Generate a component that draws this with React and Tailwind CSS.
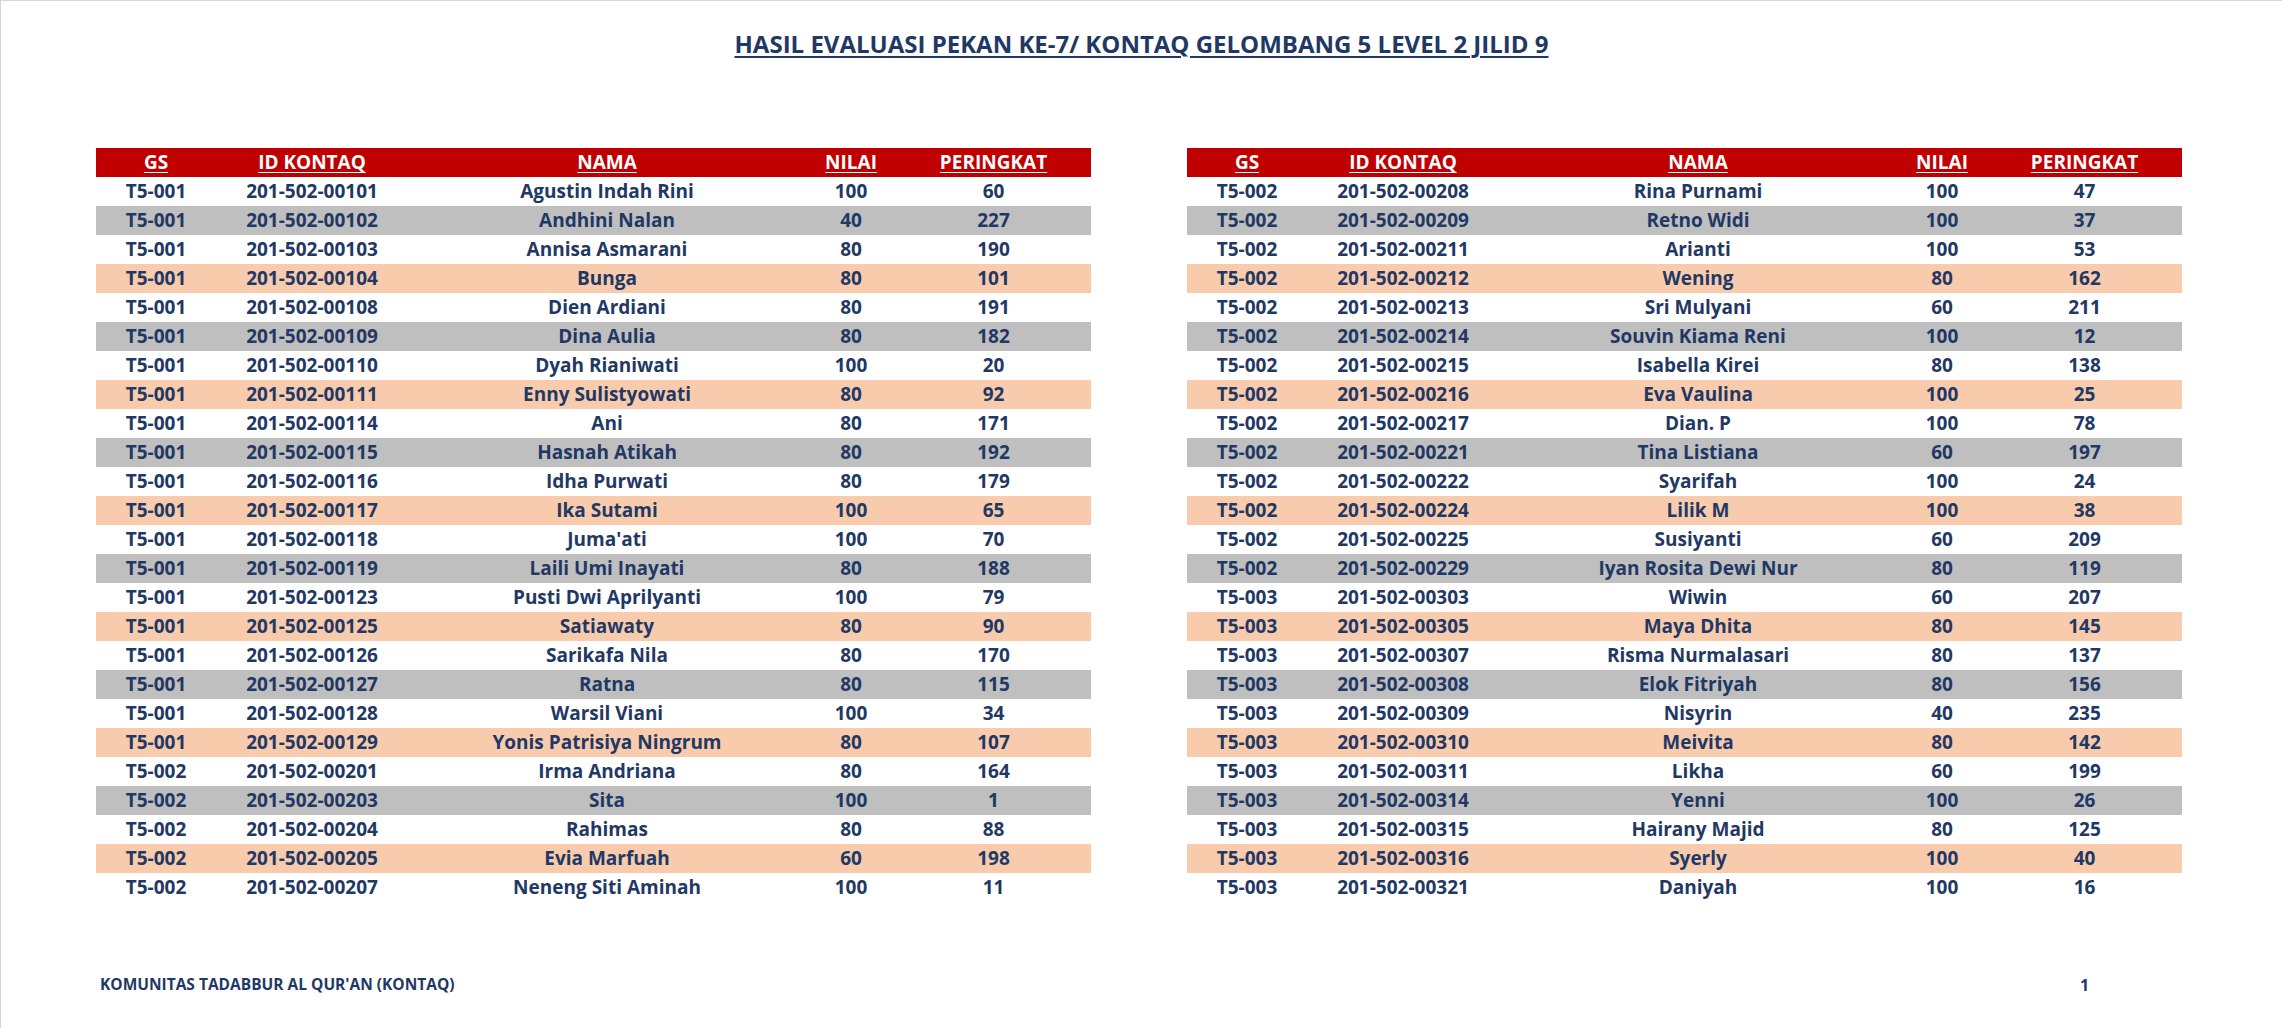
import React from 'react';

const cols = 'grid grid-cols-[120px_192px_398px_90px_195px]';

const leftRows = [
  ['T5-001', '201-502-00101', 'Agustin Indah Rini', 100, 60],
  ['T5-001', '201-502-00102', 'Andhini Nalan', 40, 227],
  ['T5-001', '201-502-00103', 'Annisa Asmarani', 80, 190],
  ['T5-001', '201-502-00104', 'Bunga', 80, 101],
  ['T5-001', '201-502-00108', 'Dien Ardiani', 80, 191],
  ['T5-001', '201-502-00109', 'Dina Aulia', 80, 182],
  ['T5-001', '201-502-00110', 'Dyah Rianiwati', 100, 20],
  ['T5-001', '201-502-00111', 'Enny Sulistyowati', 80, 92],
  ['T5-001', '201-502-00114', 'Ani', 80, 171],
  ['T5-001', '201-502-00115', 'Hasnah Atikah', 80, 192],
  ['T5-001', '201-502-00116', 'Idha Purwati', 80, 179],
  ['T5-001', '201-502-00117', 'Ika Sutami', 100, 65],
  ['T5-001', '201-502-00118', "Juma'ati", 100, 70],
  ['T5-001', '201-502-00119', 'Laili Umi Inayati', 80, 188],
  ['T5-001', '201-502-00123', 'Pusti Dwi Aprilyanti', 100, 79],
  ['T5-001', '201-502-00125', 'Satiawaty', 80, 90],
  ['T5-001', '201-502-00126', 'Sarikafa Nila', 80, 170],
  ['T5-001', '201-502-00127', 'Ratna', 80, 115],
  ['T5-001', '201-502-00128', 'Warsil Viani', 100, 34],
  ['T5-001', '201-502-00129', 'Yonis Patrisiya Ningrum', 80, 107],
  ['T5-002', '201-502-00201', 'Irma Andriana', 80, 164],
  ['T5-002', '201-502-00203', 'Sita', 100, 1],
  ['T5-002', '201-502-00204', 'Rahimas', 80, 88],
  ['T5-002', '201-502-00205', 'Evia Marfuah', 60, 198],
  ['T5-002', '201-502-00207', 'Neneng Siti Aminah', 100, 11],
];

const rightRows = [
  ['T5-002', '201-502-00208', 'Rina Purnami', 100, 47],
  ['T5-002', '201-502-00209', 'Retno Widi', 100, 37],
  ['T5-002', '201-502-00211', 'Arianti', 100, 53],
  ['T5-002', '201-502-00212', 'Wening', 80, 162],
  ['T5-002', '201-502-00213', 'Sri Mulyani', 60, 211],
  ['T5-002', '201-502-00214', 'Souvin Kiama Reni', 100, 12],
  ['T5-002', '201-502-00215', 'Isabella Kirei', 80, 138],
  ['T5-002', '201-502-00216', 'Eva Vaulina', 100, 25],
  ['T5-002', '201-502-00217', 'Dian. P', 100, 78],
  ['T5-002', '201-502-00221', 'Tina Listiana', 60, 197],
  ['T5-002', '201-502-00222', 'Syarifah', 100, 24],
  ['T5-002', '201-502-00224', 'Lilik M', 100, 38],
  ['T5-002', '201-502-00225', 'Susiyanti', 60, 209],
  ['T5-002', '201-502-00229', 'Iyan Rosita Dewi Nur', 80, 119],
  ['T5-003', '201-502-00303', 'Wiwin', 60, 207],
  ['T5-003', '201-502-00305', 'Maya Dhita', 80, 145],
  ['T5-003', '201-502-00307', 'Risma Nurmalasari', 80, 137],
  ['T5-003', '201-502-00308', 'Elok Fitriyah', 80, 156],
  ['T5-003', '201-502-00309', 'Nisyrin', 40, 235],
  ['T5-003', '201-502-00310', 'Meivita', 80, 142],
  ['T5-003', '201-502-00311', 'Likha', 60, 199],
  ['T5-003', '201-502-00314', 'Yenni', 100, 26],
  ['T5-003', '201-502-00315', 'Hairany Majid', 80, 125],
  ['T5-003', '201-502-00316', 'Syerly', 100, 40],
  ['T5-003', '201-502-00321', 'Daniyah', 100, 16],
];

const headers = ['GS', 'ID KONTAQ', 'NAMA', 'NILAI', 'PERINGKAT'];

// white, grey, white, peach ... repeating
const rowBg = (i) => {
  if (i % 4 === 1) return 'bg-[#bfbfbf]';
  if (i % 4 === 3) return 'bg-[#f8cbad]';
  return 'bg-white';
};

const ScoreTable = ({ rows }) => (
  <div className="w-[995px] text-[19px] font-bold">
    <div className={`${cols} h-[29px] items-center bg-[#c00000] text-white`}>
      {headers.map((h) => (
        <span key={h} className="text-center underline underline-offset-[3px]">{h}</span>
      ))}
    </div>
    {rows.map((r, i) => (
      <div key={r[1]} className={`${cols} h-[29px] items-center text-[#1f3864] ${rowBg(i)}`}>
        {r.map((cell, j) => (
          <span key={j} className="text-center whitespace-nowrap">{cell}</span>
        ))}
      </div>
    ))}
  </div>
);

export default function App() {
  return (
    <div
      className="w-[2282px] h-[1028px] bg-white border-t border-l border-[#d6d6d6] flex flex-col text-[#1f3864]"
      style={{ fontFamily: '"Open Sans", "Liberation Sans", sans-serif' }}
    >
      <h1 className="pt-[28px] text-center text-[24px] leading-[30px] font-bold underline decoration-2 underline-offset-[3px]">
        HASIL EVALUASI PEKAN KE-7/ KONTAQ GELOMBANG 5 LEVEL 2 JILID 9
      </h1>

      <div className="mt-[89px] pl-[95px] flex gap-[96px]">
        <ScoreTable rows={leftRows} />
        <ScoreTable rows={rightRows} />
      </div>

      <div className="mt-[68px] pl-[95px] flex gap-[96px] font-bold">
        <div className="w-[995px] h-[29px] flex items-center pl-[4px] text-[15.5px]">
          KOMUNITAS TADABBUR AL QUR'AN (KONTAQ)
        </div>
        <div className={`${cols} w-[995px] h-[29px] items-center`}>
          <span />
          <span />
          <span />
          <span />
          <span className="text-center text-[16px]">1</span>
        </div>
      </div>
    </div>
  );
}
